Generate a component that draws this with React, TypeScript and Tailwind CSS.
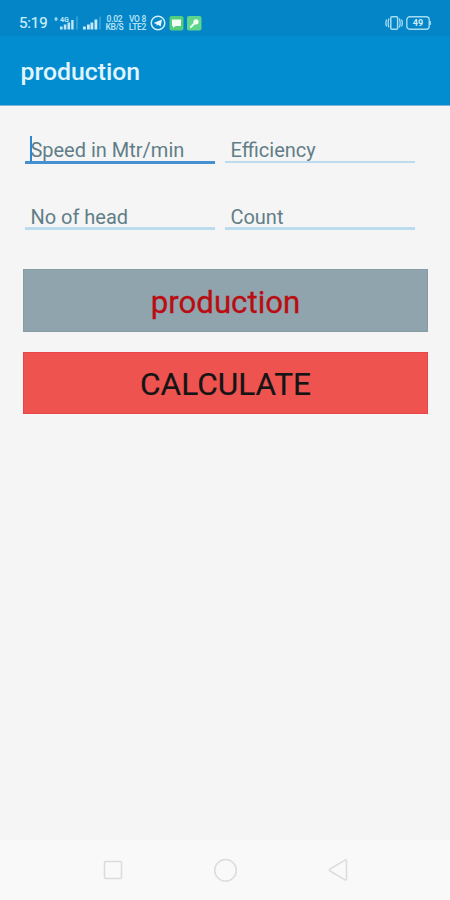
import { useState } from "react";
import clsx from "clsx";

type FieldKey = "speed" | "efficiency" | "heads" | "count";

const FIELDS: { key: FieldKey; label: string }[] = [
  { key: "speed", label: "Speed in Mtr/min" },
  { key: "efficiency", label: "Efficiency" },
  { key: "heads", label: "No of head" },
  { key: "count", label: "Count" },
];

function RoamingSignalIcon() {
  return (
    <svg width="25" height="16" viewBox="0 0 25 16" className="shrink-0" fill="#bfe6f8">
      <path d="M-.3 4.600 2 1.800l2.300 2.800H2.800V6H1.200V4.600z" opacity="0.85" />
      <text x="6" y="6.500" fontSize="7" fontWeight="700" fontFamily="Roboto, sans-serif">
        4G
      </text>
      <rect x="6" y="11.500" width="2.600" height="3" />
      <rect x="9.800" y="9.500" width="2.600" height="5" />
      <rect x="13.500" y="7.500" width="2.600" height="7" />
      <rect x="17.200" y="5" width="2.400" height="9.500" />
      <rect x="22" y="1.500" width="2" height="13" opacity="0.25" />
    </svg>
  );
}

function SignalIcon() {
  return (
    <svg width="25" height="16" viewBox="0 0 25 16" className="shrink-0" fill="#c8ebfa">
      <rect x="4" y="11.500" width="2.800" height="3" />
      <rect x="8" y="9.500" width="2.800" height="5" />
      <rect x="11.500" y="7.500" width="2.800" height="7" />
      <rect x="15.500" y="4.500" width="2.800" height="10" />
      <rect x="20" y="1.500" width="2" height="13" opacity="0.22" />
    </svg>
  );
}

function StackedLabel({ top, bottom, className }: { top: string; bottom: string; className?: string }) {
  return (
    <span
      className={clsx(
        "flex flex-col items-center text-[8.5px] leading-[8px] font-semibold whitespace-nowrap text-[#b4e2f6]",
        className,
      )}
    >
      <span>{top}</span>
      <span>{bottom}</span>
    </span>
  );
}

function StatusBar() {
  return (
    <div className="flex h-9 items-center bg-[#0385c7] pt-[10px] pr-[18px] pl-[19px] text-[#d0effc]">
      <span className="w-[35px] text-[15px] leading-4 tracking-[-0.1px] [-webkit-text-stroke:0.2px]">5:19</span>
      <RoamingSignalIcon />
      <SignalIcon />
      <StackedLabel top="0.02" bottom="KB/S" className="ml-[1px] w-[19px] tracking-[-0.3px]" />
      <StackedLabel top="VO 8" bottom="LTE2" className="ml-[4px] w-[19px] tracking-[-0.3px]" />

      <svg width="16" height="16" viewBox="0 0 16 16" className="ml-[3px] shrink-0">
        <circle cx="8" cy="8" r="6.800" fill="none" stroke="#d0effc" strokeWidth="1.500" />
        <path d="M3.500 8 12 4.500 10.700 11.500 8 9.700 6.600 11V9z" fill="#e6f7ff" />
      </svg>
      <svg width="15" height="15" viewBox="0 0 15 15" className="ml-[3px] shrink-0">
        <rect x="0.500" y="0" width="14" height="14.500" rx="2" fill="#54cd7c" />
        <path d="M3 3.500h9v6.500H6.500L4 12v-2H3z" fill="#f2fff6" />
      </svg>
      <svg width="15" height="15" viewBox="0 0 15 15" className="ml-[3px] shrink-0">
        <rect x="0" y="0" width="14.500" height="14.500" rx="2" fill="#5fd58b" />
        <path d="M3.800 11 8.500 6.500" stroke="#e4ffed" strokeWidth="2" strokeLinecap="round" />
        <circle cx="9" cy="5.800" r="2.600" fill="#f2fff6" />
      </svg>

      <svg
        width="18"
        height="14"
        viewBox="0 0 18 14"
        className="ml-auto shrink-0"
        fill="none"
        stroke="#a6dbf4"
        strokeWidth="1.300"
        strokeLinecap="round"
      >
        <rect x="5.800" y="0.800" width="6.800" height="12.400" rx="1" strokeWidth="1.500" />
        <path d="M3.800 3q-1.300 4 0 8M1.500 4q-1.300 3 0 6M14.500 3q1.300 4 0 8M16.700 4q1.300 3 0 6" />
      </svg>
      <svg width="26" height="14" viewBox="0 0 26 14" className="ml-[3px] shrink-0">
        <rect x="0.800" y="0.800" width="22.400" height="12.400" rx="3" fill="none" stroke="#a6dbf4" strokeWidth="1.400" />
        <path d="M24 5q1.200 2 0 4z" fill="#a6dbf4" stroke="#a6dbf4" />
        <text
          x="12"
          y="10"
          textAnchor="middle"
          fontSize="9"
          fontWeight="700"
          fontFamily="Roboto, sans-serif"
          fill="#d0effc"
        >
          49
        </text>
      </svg>
    </div>
  );
}

function Field({
  label,
  value,
  active,
  thick,
  onFocus,
  onChange,
}: {
  label: string;
  value: string;
  active: boolean;
  thick: boolean;
  onFocus: () => void;
  onChange: (value: string) => void;
}) {
  return (
    <label className="relative block h-[67px]">
      <input
        aria-label={label}
        placeholder={label}
        value={value}
        inputMode="decimal"
        onFocus={onFocus}
        onChange={(e) => onChange(e.target.value)}
        className={clsx(
          "block w-full bg-transparent px-[5px] text-[20px] leading-[22px] text-[#37474f] outline-none placeholder:text-[#617e88]",
          active ? "h-[34px] border-[#4590d0]" : "h-[33px] border-[#bbdcef]",
          thick ? "border-b-[3px] pt-[9px]" : "border-b-2 pt-[8px]",
        )}
      />
      {active && !value ? <span className="absolute top-[6px] left-[5px] h-[26px] w-[2px] bg-[#2c89ce]" /> : null}
    </label>
  );
}

export default function App() {
  const [values, setValues] = useState<Record<FieldKey, string>>({
    speed: "",
    efficiency: "",
    heads: "",
    count: "",
  });
  const [active, setActive] = useState<FieldKey>("speed");
  const [result, setResult] = useState("production");

  function calculate() {
    const speed = Number(values.speed);
    const count = Number(values.count);
    if (!speed || !count) return;
    const kg = (speed * 480 * Number(values.heads) * Number(values.efficiency)) / (count * 1693 * 100);
    setResult(kg.toFixed(2));
  }

  return (
    <div className="flex h-[900px] w-[450px] flex-col overflow-hidden bg-[#f5f5f5] font-['Roboto',sans-serif]">
      <StatusBar />
      <header className="flex h-[70px] items-center border-b border-[#83b3dc] bg-[#018dd0] px-[20.5px] pt-[3px]">
        <h1 className="text-[24.8px] leading-8 font-medium text-[#e2f5ff]">production</h1>
      </header>

      <main className="flex-1 pr-[22px] pl-[23px]">
        <div className="grid grid-cols-[190px_190px] gap-x-[10px] pt-[24px] pl-[2.4px]">
          {FIELDS.map((f, i) => (
            <Field
              key={f.key}
              label={f.label}
              value={values[f.key]}
              active={active === f.key}
              thick={i !== 1}
              onFocus={() => setActive(f.key)}
              onChange={(v) => setValues((prev) => ({ ...prev, [f.key]: v }))}
            />
          ))}
        </div>

        <div className="mt-[5px] flex h-[63px] items-center justify-center border border-[#879ca5] bg-[#90a4ae] pt-[6px] text-[31.2px] text-[#b90d12] [-webkit-text-stroke:0.3px]">
          {result}
        </div>
        <button
          type="button"
          onClick={calculate}
          className="mt-5 flex h-[62px] w-full items-center justify-center border border-[#e9444a] bg-[#ef5350] pt-[3px] text-[31.6px] text-[#151515] [-webkit-text-stroke:0.2px]"
        >
          CALCULATE
        </button>
      </main>

      <nav className="flex h-[60px] items-center bg-[#f9f9f9] text-[#dcdcdc]">
        <svg width="450" height="28" viewBox="0 0 450 28" fill="none" stroke="currentColor" strokeWidth="1.500">
          <rect x="104.500" y="5.500" width="17" height="17" rx="1" />
          <circle cx="225.500" cy="14.300" r="10.800" />
          <path d="M346.500 5v18q0 1.500-1.500.8l-15-8.800q-1.500-1 0-2L345 4.200q1.500-.7 1.500.8z" />
        </svg>
      </nav>
    </div>
  );
}
